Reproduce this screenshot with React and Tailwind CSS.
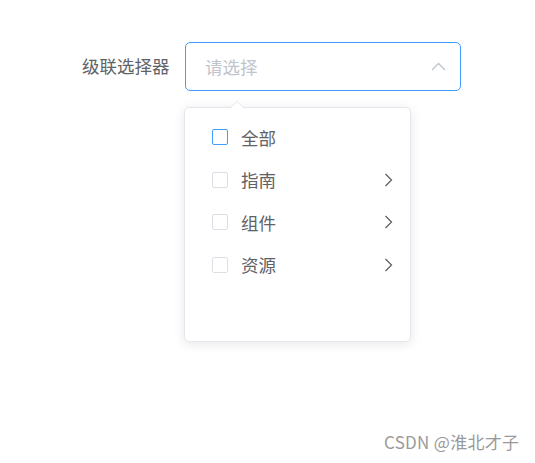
export default function App() {
  const font = { fontFamily: '"Microsoft YaHei","Noto Sans CJK SC","Noto Sans",sans-serif' };
  const items = [
    { label: "全部", active: true, more: false },
    { label: "指南", active: false, more: true },
    { label: "组件", active: false, more: true },
    { label: "资源", active: false, more: true },
  ];
  return (
    <div className="relative w-[535px] h-[463px] bg-white overflow-hidden" style={font}>
      <div className="flex items-center pt-[42px] pl-[82px]">
        <div className="w-[88px] text-[17.5px] text-[#606266] leading-none pb-[1px] whitespace-nowrap">级联选择器</div>
        <div className="ml-[15px] w-[276px] h-[49px] border border-[#409eff] rounded-[5px] flex items-center pl-[19px] pr-[14px]">
          <span className="flex-1 text-[17.5px] text-[#c0c4cc] leading-none">请选择</span>
          <svg width="15" height="9" viewBox="0 0 15 9" className="mb-[1px]">
            <path d="M1 8 L7.5 1.5 L14 8" fill="none" stroke="#c0c4cc" strokeWidth="1.4" />
          </svg>
        </div>
      </div>

      <div className="absolute left-[184px] top-[107px] w-[227px] h-[235px] bg-white border border-[#e4e7ed] rounded-[5px] shadow-[0_2px_12px_0_rgba(0,0,0,0.1)] pt-[8px]">
        <svg className="absolute left-[44px] top-[-7px]" width="16" height="8" viewBox="0 0 16 8">
          <path d="M0 8 L8 0.5 L16 8" fill="white" stroke="#e4e7ed" strokeWidth="1" />
          <rect x="0" y="7.5" width="16" height="2" fill="white" />
        </svg>
        {items.map((it) => (
          <div key={it.label} className="flex items-center h-[42.5px] pl-[27px] pr-[17px]">
            <span
              className={
                "w-[16px] h-[16px] rounded-[2px] border bg-white " +
                (it.active ? "border-[#409eff]" : "border-[#dcdfe6]")
              }
            />
            <span className="ml-[13px] flex-1 text-[17.5px] text-[#606266] leading-none">{it.label}</span>
            {it.more && (
              <svg width="9" height="14" viewBox="0 0 9 14">
                <path d="M1.5 1 L7.5 7 L1.5 13" fill="none" stroke="#606266" strokeWidth="1.3" />
              </svg>
            )}
          </div>
        ))}
      </div>

      <div className="absolute left-[384px] top-[431px] text-[17px] tracking-[0.3px] text-[#9a9a9a] leading-[22px] whitespace-nowrap">
        CSDN @淮北才子
      </div>
    </div>
  );
}
